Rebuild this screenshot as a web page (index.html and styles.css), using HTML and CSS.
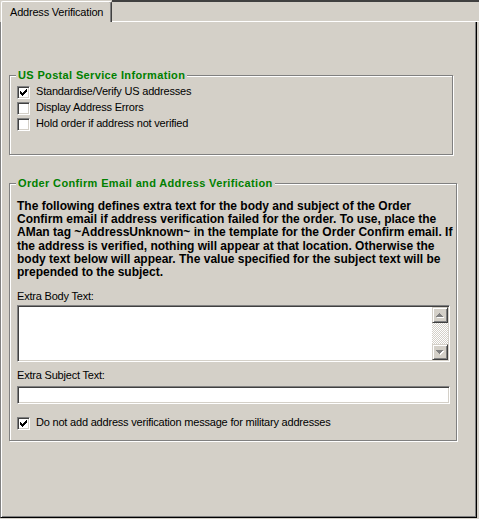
FILE: index.html
```html
<!DOCTYPE html>
<html>
<head>
<meta charset="utf-8">
<link rel="stylesheet" href="styles.css">
</head>
<body>
<div class="window">
  <div class="tabstrip">
    <div class="tab">Address Verification</div>
    <div class="tabfill"></div>
  </div>
  <div class="panel">
    <fieldset class="group group-usps">
      <legend>US Postal Service Information</legend>
      <div class="checks">
        <div class="row">
          <span class="cb"><svg width="7" height="7" viewBox="0 0 7 7"><path d="M6 0h1v1h-1zM5 1h2v1h-2zM0 2h1v1h-1zM4 2h3v1h-3zM0 3h2v1h-2zM3 3h3v1h-3zM0 4h5v1h-5zM1 5h3v1h-3zM2 6h1v1h-1z" fill="#000"/></svg></span>
          <span class="lbl">Standardise/Verify US addresses</span>
        </div>
        <div class="row">
          <span class="cb"></span>
          <span class="lbl">Display Address Errors</span>
        </div>
        <div class="row">
          <span class="cb"></span>
          <span class="lbl">Hold order if address not verified</span>
        </div>
      </div>
    </fieldset>
    <fieldset class="group group-email">
      <legend>Order Confirm Email and Address Verification</legend>
      <div class="email-body">
        <p class="desc">The following defines extra text for the body and subject of the Order<br>Confirm email if address verification failed for the order. To use, place the<br>AMan tag ~AddressUnknown~ in the template for the Order Confirm email. If<br>the address is verified, nothing will appear at that location. Otherwise the<br>body text below will appear. The value specified for the subject text will be<br>prepended to the subject.</p>
        <div class="field-label label-body">Extra Body Text:</div>
        <div class="memo">
          <div class="vscroll">
            <div class="sbtn"><svg width="8" height="5" viewBox="0 0 8 5"><path transform="translate(1 1)" d="M3 0h1v1h-1zM2 1h3v1h-3zM1 2h5v1h-5zM0 3h7v1h-7z" fill="#fff"/><path d="M3 0h1v1h-1zM2 1h3v1h-3zM1 2h5v1h-5zM0 3h7v1h-7z" fill="#808080"/></svg></div>
            <div class="strack"></div>
            <div class="sbtn"><svg width="8" height="5" viewBox="0 0 8 5"><path transform="translate(1 1)" d="M0 0h7v1h-7zM1 1h5v1h-5zM2 2h3v1h-3zM3 3h1v1h-1z" fill="#fff"/><path d="M0 0h7v1h-7zM1 1h5v1h-5zM2 2h3v1h-3zM3 3h1v1h-1z" fill="#808080"/></svg></div>
          </div>
        </div>
        <div class="field-label label-subject">Extra Subject Text:</div>
        <div class="edit"></div>
        <div class="row row-military">
          <span class="cb"><svg width="7" height="7" viewBox="0 0 7 7"><path d="M6 0h1v1h-1zM5 1h2v1h-2zM0 2h1v1h-1zM4 2h3v1h-3zM0 3h2v1h-2zM3 3h3v1h-3zM0 4h5v1h-5zM1 5h3v1h-3zM2 6h1v1h-1z" fill="#000"/></svg></span>
          <span class="lbl">Do not add address verification message for military addresses</span>
        </div>
      </div>
    </fieldset>
  </div>
</div>
</body>
</html>
```
FILE: styles.css
```css
* { box-sizing: border-box; }

body {
  margin: 0;
  background: #d4d0c8;
  font-family: "Liberation Sans", Arial, sans-serif;
  font-size: 11px;
  line-height: 13px;
  letter-spacing: -0.2px;
  color: #000;
}

.window {
  width: 479px;
  height: 519px;
}

.tabstrip {
  display: flex;
  height: 22px;
}

.tab {
  margin: 1px 0 0 1px;
  width: 111px;
  height: 21px;
  border-top: 1px solid #fff;
  border-left: 1px solid #fff;
  border-right: 1px solid #404040;
  border-radius: 2px 2px 0 0;
  box-shadow: inset -1px 0 #808080;
  padding: 4px 0 0 8px;
  white-space: nowrap;
}

.tabfill {
  flex: 1;
  border-top: 2px solid #404040;
  border-bottom: 1px solid #fff;
}

.panel {
  width: 477px;
  height: 496px;
  border-left: 1px solid #808080;
  border-right: 1px solid #000;
  border-bottom: 1px solid #000;
  box-shadow: inset 1px 0 #fff, inset -1px -1px #808080;
  padding: 47px 0 0 8px;
}

.group {
  margin: 0;
  padding: 0;
  min-width: 0;
  border: 1px solid #808080;
  box-shadow: inset 1px 1px #fff, 1px 1px #fff;
}

.group legend {
  margin-left: 6px;
  padding: 0 2px;
  color: #008000;
  font-weight: bold;
  letter-spacing: 0.35px;
  line-height: 13px;
  background: #d4d0c8;
}

.group-usps {
  width: 444px;
}

.group-email {
  width: 448px;
  margin-top: 22px;
}

.checks {
  padding: 3px 0 21px 7px;
}

.row {
  display: flex;
  align-items: flex-start;
  height: 16px;
}

.cb {
  flex: none;
  width: 13px;
  height: 13px;
  margin-top: 1px;
  padding: 2px;
  background: #fff;
  border: 1px solid;
  border-color: #808080 #fff #fff #808080;
  box-shadow: inset 1px 1px #404040, inset -1px -1px #d4d0c8;
  display: flex;
}

.cb svg {
  display: block;
}

.lbl {
  margin-left: 6px;
  white-space: nowrap;
}

.email-body {
  padding: 10px 6px 8px 7px;
}

.desc {
  margin: 0;
  font-size: 12px;
  font-weight: bold;
  line-height: 13.2px;
  letter-spacing: 0;
  white-space: nowrap;
}

.label-body {
  margin-top: 11px;
}

.label-subject {
  margin-top: 7px;
}

.memo {
  margin-top: 2px;
  height: 57px;
  display: flex;
  justify-content: flex-end;
  padding: 1px;
  background: #fff;
  border: 1px solid;
  border-color: #808080 #fff #fff #808080;
  box-shadow: inset 1px 1px #404040, inset -1px -1px #d4d0c8;
}

.vscroll {
  width: 16px;
  display: flex;
  flex-direction: column;
}

.sbtn {
  height: 16px;
  flex: none;
  display: flex;
  align-items: center;
  justify-content: center;
  background: #d4d0c8;
  border: 1px solid;
  border-color: #d4d0c8 #404040 #404040 #d4d0c8;
  box-shadow: inset 1px 1px #fff, inset -1px -1px #808080;
}

.sbtn svg {
  display: block;
}

.strack {
  flex: 1;
  background: repeating-conic-gradient(#fff 0 25%, #d4d0c8 0 50%) 0 0 / 2px 2px;
}

.edit {
  margin-top: 4px;
  height: 18px;
  background: #fff;
  border: 1px solid;
  border-color: #808080 #fff #fff #808080;
  box-shadow: inset 1px 1px #404040, inset -1px -1px #d4d0c8;
}

.row-military {
  margin-top: 12px;
}
```
